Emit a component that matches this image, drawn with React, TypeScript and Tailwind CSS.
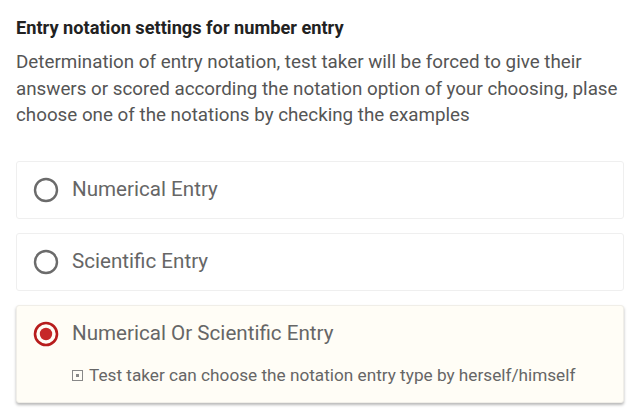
import React, { useState } from 'react'

const OPTIONS = [
  { key: 'numerical', label: 'Numerical Entry' },
  { key: 'scientific', label: 'Scientific Entry' },
  { key: 'both', label: 'Numerical Or Scientific Entry', hint: 'Test taker can choose the notation entry type by herself/himself' },
]

function Radio({ checked }: { checked: boolean }) {
  return (
    <svg width="26" height="26" viewBox="0 0 26 26" className="shrink-0">
      {checked ? (
        <>
          <circle cx="13" cy="13" r="11" fill="none" stroke="#b71c1c" strokeWidth="2.6" />
          <circle cx="13" cy="13" r="6.2" fill="#c62828" />
        </>
      ) : (
        <circle cx="13" cy="13" r="11" fill="none" stroke="#6b6b6b" strokeWidth="2.4" />
      )}
    </svg>
  )
}

export default function App() {
  const [value, setValue] = useState('both')

  return (
    <div className="w-[640px] h-[416px] bg-white px-4 pt-[16px] overflow-hidden" style={{ fontFamily: 'Roboto, "Liberation Sans", sans-serif' }}>
      <h1 className="text-[18.2px] leading-[24px] font-bold text-[#222]">Entry notation settings for number entry</h1>
      <p className="mt-[9px] text-[18.8px] leading-[26.5px] text-[#555]">
        Determination of entry notation, test taker will be forced to give their answers or scored according the notation option of your choosing, plase choose one of the notations by checking the examples
      </p>

      <div className="mt-[32px] flex flex-col gap-[14px] w-[608px]">
        {OPTIONS.map((o) => {
          const checked = value === o.key
          return (
            <div
              key={o.key}
              onClick={() => setValue(o.key)}
              className={
                checked
                  ? 'bg-[#fffdf6] border border-[#f0eee8] rounded-[3px] shadow-[0_2px_3px_rgba(0,0,0,0.28)] cursor-pointer'
                  : 'bg-white border border-[#efefef] rounded-[3px] cursor-pointer'
              }
            >
              <div className="h-[56px] flex items-center pl-[16px] gap-[13px]">
                <Radio checked={checked} />
                <span className="text-[20.6px] text-[#666]">{o.label}</span>
              </div>
              {checked && o.hint && (
                <div className="h-[24px] mt-[2px] mb-[14px] flex items-center pl-[55px] gap-[6px]">
                  <svg width="11" height="11" viewBox="0 0 11 11">
                    <rect x="0.5" y="0.5" width="10" height="10" fill="none" stroke="#888" strokeWidth="1" />
                    <rect x="4" y="4" width="3" height="3" fill="#888" />
                  </svg>
                  <span className="text-[17.2px] text-[#666]">{o.hint}</span>
                </div>
              )}
            </div>
          )
        })}
      </div>
    </div>
  )
}
